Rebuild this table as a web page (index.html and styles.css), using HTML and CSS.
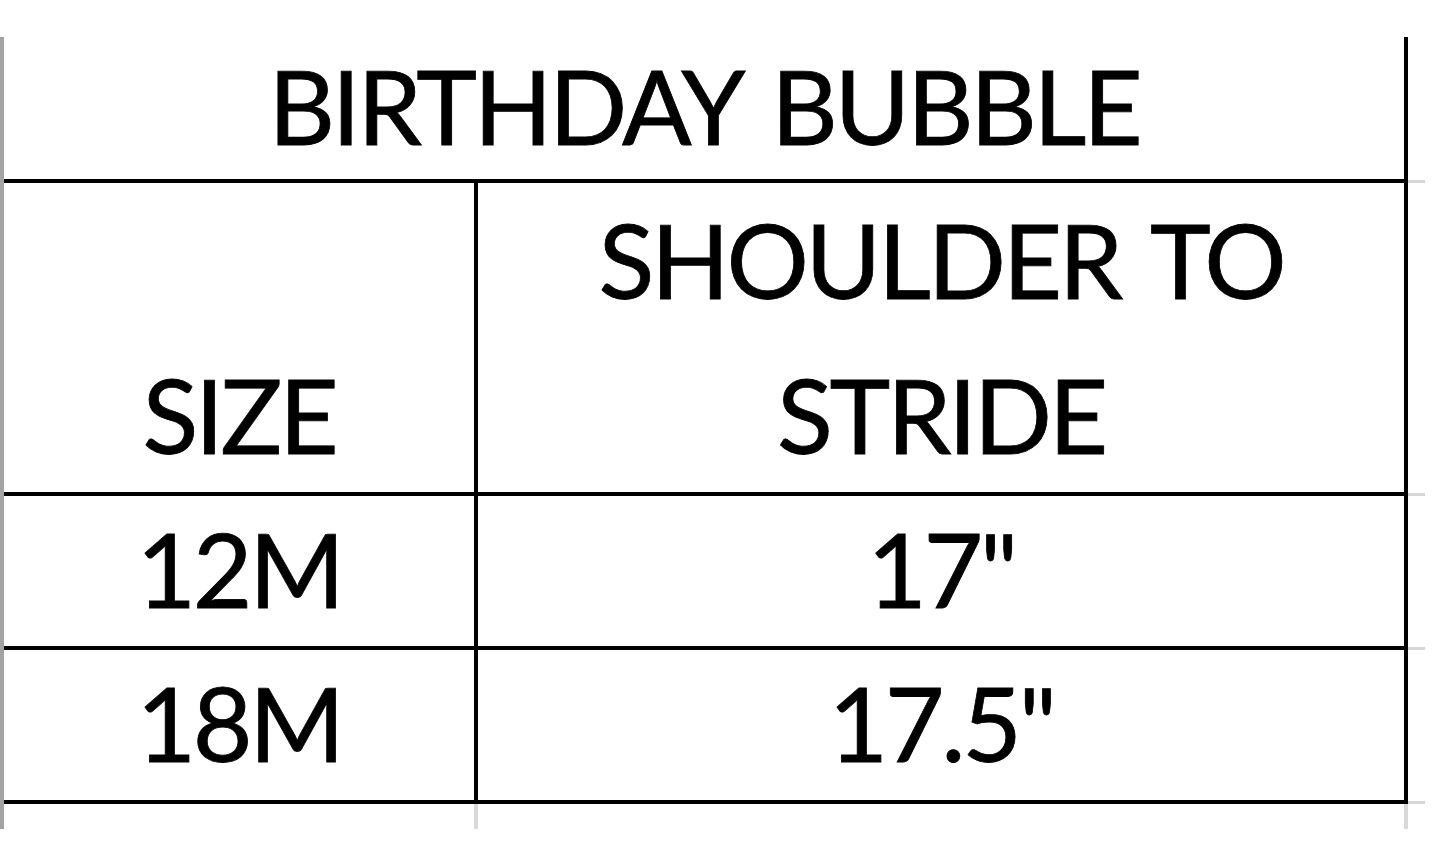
FILE: index.html
```html
<!DOCTYPE html>
<html>
<head>
<meta charset="utf-8">
<link rel="stylesheet" href="styles.css">
</head>
<body>
<div class="sheet">
  <div class="edge"></div>
  <div class="cell title">BIRTHDAY BUBBLE</div>
  <div class="hline r2"></div>
  <div class="hline r4"></div>
  <div class="hline r6"></div>
  <div class="hline r8"></div>
  <div class="vline-right"></div>
  <div class="vline-mid"></div>
  <div class="cell c-left r3">SIZE</div>
  <div class="cell c-right r3">SHOULDER TO<br>STRIDE</div>
  <div class="cell c-left r5">12M</div>
  <div class="cell c-right r5">17"</div>
  <div class="cell c-left r7">18M</div>
  <div class="cell c-right r7">17.5"</div>
  <div class="stub-h r2"></div>
  <div class="stub-h r4"></div>
  <div class="stub-h r6"></div>
  <div class="stub-h r8"></div>
  <div class="stub-v mid"></div>
  <div class="stub-v right"></div>
</div>
</body>
</html>
```

FILE: styles.css
```css
html, body {
  margin: 0;
  padding: 0;
  background: #ffffff;
}
body {
  font-family: Lato, "Open Sans", sans-serif;
  color: #000000;
}
.sheet {
  display: grid;
  grid-template-columns: 4px 470px 4px 926px 4px 17px;
  grid-template-rows: 142px 4px 309px 4px 150px 4px 150px 4px 25px;
  margin-top: 37px;
}
.edge {
  grid-column: 1;
  grid-row: 1 / 10;
  background: #a3a3a3;
}
.cell {
  display: flex;
  flex-direction: column;
  justify-content: flex-end;
  align-items: center;
  text-align: center;
  font-size: 103px;
  line-height: 155px;
  letter-spacing: -3.3px;
  word-spacing: 10px;
  white-space: nowrap;
  -webkit-text-stroke: 0.8px #000000;
}
.title {
  grid-column: 2 / 5;
  grid-row: 1;
  line-height: 140px;
  padding-bottom: 4px;
}
.c-left { grid-column: 2; }
.c-right { grid-column: 4; }
.r2 { grid-row: 2; }
.r3 { grid-row: 3; }
.r4 { grid-row: 4; }
.r5 { grid-row: 5; }
.r6 { grid-row: 6; }
.r7 { grid-row: 7; }
.r8 { grid-row: 8; }
.hline {
  grid-column: 2 / 6;
  background: #000000;
}
.vline-right {
  grid-column: 5;
  grid-row: 1 / 9;
  background: #000000;
}
.vline-mid {
  grid-column: 3;
  grid-row: 3 / 9;
  background: #000000;
}
.stub-h {
  grid-column: 6;
  height: 3px;
  align-self: center;
  background: #d6d6d6;
}
.stub-v {
  grid-row: 9;
  background: #d9d9d9;
}
.stub-v.mid { grid-column: 3; }
.stub-v.right { grid-column: 5; }
```
